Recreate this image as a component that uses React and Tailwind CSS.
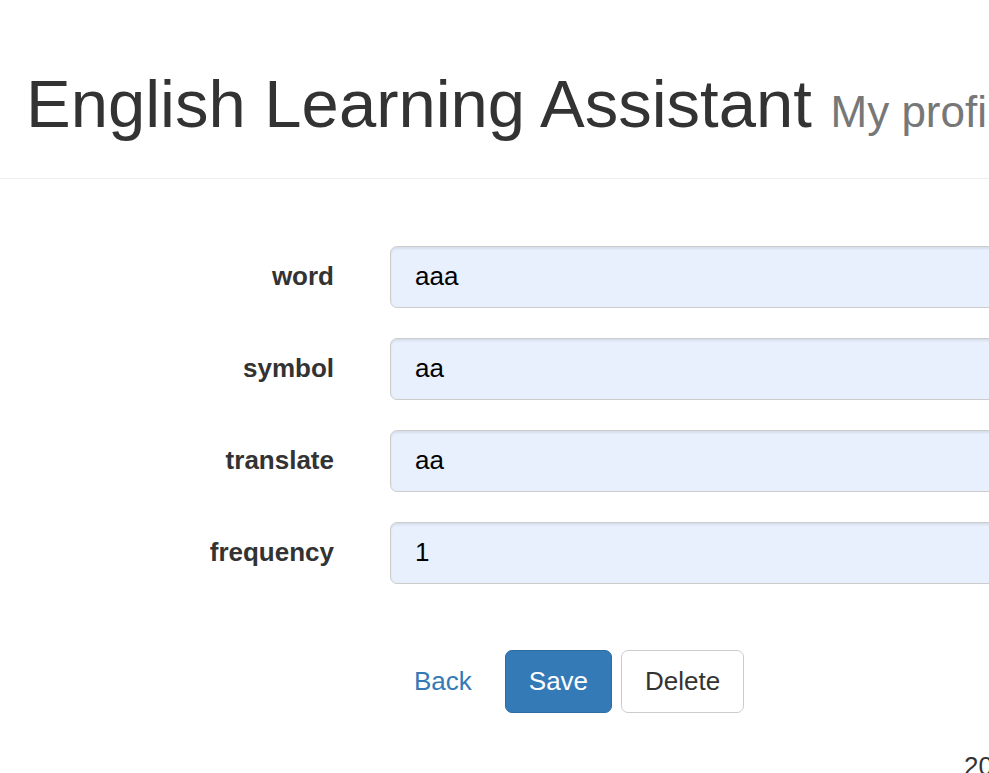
import { useState } from "react";

const fields = [
  { name: "word", value: "aaa" },
  { name: "symbol", value: "aa" },
  { name: "translate", value: "aa" },
  { name: "frequency", value: "1" },
];

const App = () => {
  const [values, setValues] = useState(fields);

  return (
    <div className="w-[989px] h-[773px] overflow-hidden bg-white text-[#333] font-['Liberation_Sans',Arial,sans-serif]">
      <div className="w-[1400px]">
        {/* HEADER */}
        <div className="px-[26px] pt-[67px] pb-[37px] border-b border-[#eee]">
          <h1 className="text-[67px] leading-[1.1] whitespace-nowrap">
            English Learning Assistant{" "}
            <small className="text-[44px] text-[#777]">My profile</small>
          </h1>
        </div>

        {/* FORM */}
        <div className="pt-[67px] flex flex-col gap-[30px]">
          {values.map((f, i) => (
            <div key={f.name} className="flex items-center">
              <label className="w-[362px] pr-[28px] text-right font-bold text-[26px]">
                {f.name}
              </label>
              <input
                type="text"
                value={f.value}
                onChange={(e) => {
                  const next = [...values];
                  next[i] = { ...f, value: e.target.value };
                  setValues(next);
                }}
                className="ml-[28px] w-[900px] h-[62px] px-[24px] text-[26px] text-black bg-[#e8f0fe] border border-[#ccc] rounded-[7px] shadow-[inset_0_2px_2px_rgba(0,0,0,0.075)] outline-none"
              />
            </div>
          ))}
        </div>

        {/* ACTIONS */}
        <div className="mt-[66px] pl-[390px] flex items-center gap-[9px]">
          <a href="#" className="px-[24px] h-[63px] flex items-center text-[26px] text-[#337ab7]">
            Back
          </a>
          <button className="h-[63px] px-[23px] text-[26px] text-white bg-[#337ab7] border border-[#2e6da4] rounded-[7px]">
            Save
          </button>
          <button className="h-[63px] px-[23px] text-[26px] text-[#333] bg-white border border-[#ccc] rounded-[7px]">
            Delete
          </button>
        </div>

        {/* FOOTER */}
        <div className="mt-[40px] pl-[964px] text-[26px] leading-none">2017</div>
      </div>
    </div>
  );
};

export default App;
